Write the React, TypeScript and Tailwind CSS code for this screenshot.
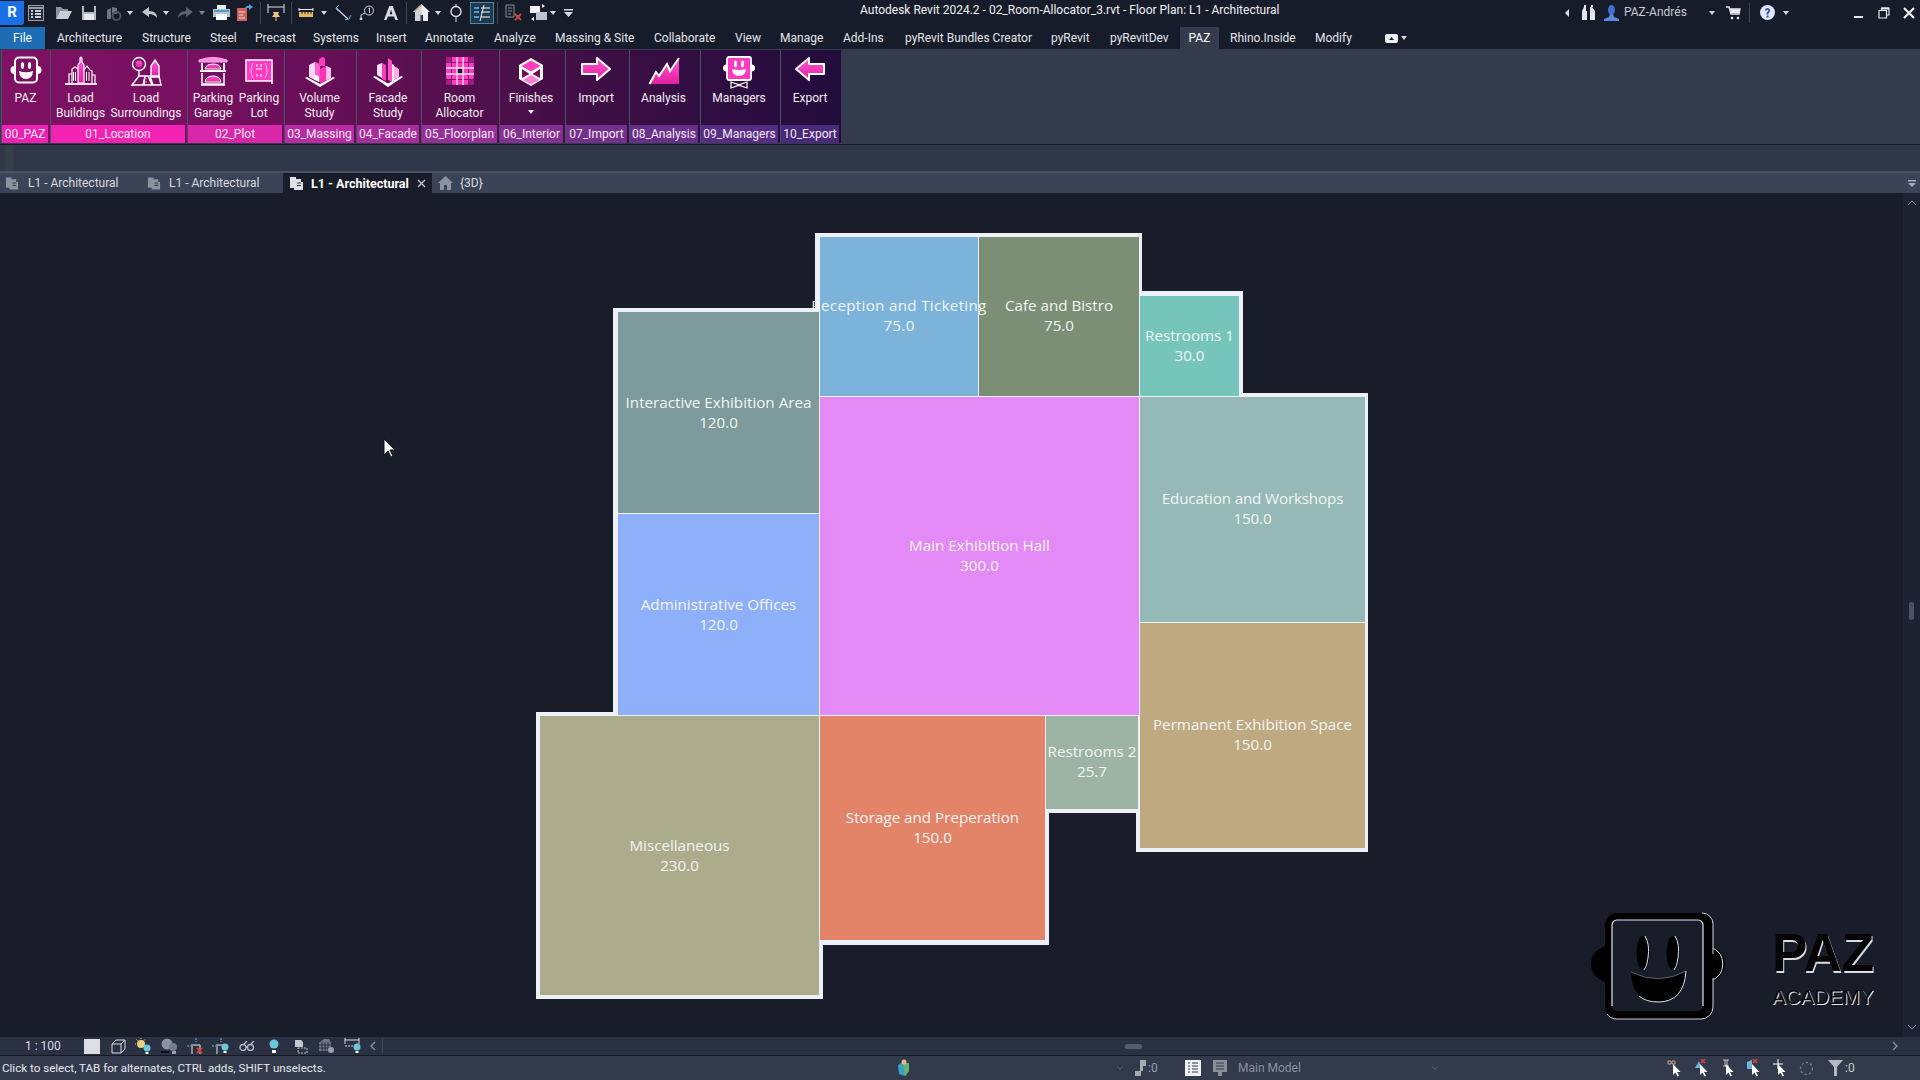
import React from "react";

const Caret = ({ c = "#d5d8de" }: { c?: string }) => (
  <svg width="6" height="4" viewBox="0 0 6 4"><path d="M0 0h6L3 4z" fill={c} /></svg>
);
const S = ({ className = "", children }: { className?: string; children?: React.ReactNode }) => (
  <span className={`flex items-center justify-center shrink-0 ${className}`}>{children}</span>
);
const Sep = ({ className = "" }: { className?: string }) => <span className={`w-px h-[22px] bg-[#3d4557] shrink-0 ${className}`} />;

const tabs: [string, string][] = [
  ["Architecture", "w-[85px]"], ["Structure", "w-[68px]"], ["Steel", "w-[45px]"], ["Precast", "w-[58px]"], ["Systems", "w-[63px]"],
  ["Insert", "w-[49px]"], ["Annotate", "w-[69px]"], ["Analyze", "w-[61px]"], ["Massing & Site", "w-[99px]"], ["Collaborate", "w-[81px]"],
  ["View", "w-[45px]"], ["Manage", "w-[63px]"], ["Add-Ins", "w-[62px]"], ["pyRevit Bundles Creator", "w-[146px]"], ["pyRevit", "w-[59px]"], ["pyRevitDev", "w-[70px]"],
];

/* ---------- ribbon icons ---------- */
const Face = () => (
  <svg width="32" height="28" viewBox="0 0 32 28">
    <circle cx="4.5" cy="14" r="4" fill="#fff" /><circle cx="27.5" cy="14" r="4" fill="#fff" />
    <rect x="5" y="1.5" width="22" height="25" rx="4" fill="#7b1160" stroke="#fff" strokeWidth="2" />
    <ellipse cx="12.5" cy="9.5" rx="1.6" ry="3.6" fill="#fff" /><ellipse cx="19.5" cy="9.5" rx="1.6" ry="3.6" fill="#fff" />
    <path d="M9 15q7 2.5 14 0q-.5 8-7 8t-7-8z" fill="#fff" />
  </svg>
);
const Buildings = () => (
  <svg width="34" height="30" viewBox="0 0 34 30" fill="none" stroke="#fff" strokeWidth="1.2">
    <path d="M14 27V9l2-3v-4l1-1 1 1v4l2 3v18z" fill="url(#pg)" />
    <path d="M8 27V13l3-2 3 2M20 14l3-4 3 4 2 1v12M5 27V18h3M28 19h3v8" />
    <path d="M9.500 16v9M11.500 16v9M22.500 16v9M25 16v9" strokeWidth="1" />
    <path d="M1 28h32" strokeWidth="1.8" />
  </svg>
);
const Surroundings = () => (
  <svg width="32" height="30" viewBox="0 0 32 30" fill="none" stroke="#fff" strokeWidth="1.4">
    <circle cx="9" cy="8" r="6.500" /><circle cx="9" cy="8" r="3.500" fill="url(#pg)" stroke="none" />
    <path d="M9 14v6" />
    <path d="M21 10l4-6 4 6v11h-8z" fill="url(#pg)" />
    <path d="M2 29l7-9h6l-2 9zM15 20h3l4 9h-8zM20 20h9l2 9h-8z" />
    <path d="M16 22v1.500M16 25v2" stroke="#ff4fd0" />
  </svg>
);
const Garage = () => (
  <svg width="32" height="30" viewBox="0 0 32 30" fill="none" stroke="#fff" strokeWidth="1.5">
    <path d="M2 4q14-5 28 0v2H2z" fill="#ff8ade" stroke="#ffb1e9" strokeWidth="1" />
    <path d="M5 7v7M27 7v7M3 15h26" strokeWidth="1.800" />
    <path d="M8 13q1-5 8-5t8 5z" fill="url(#pg)" strokeWidth="1" />
    <path d="M5 17v11h22V17" />
    <path d="M8 26q1-6 8-6t8 6z" fill="url(#pg)" strokeWidth="1" />
    <path d="M4 29h24" />
  </svg>
);
const Lot = () => (
  <svg width="32" height="30" viewBox="0 0 32 30">
    <rect x="3" y="4" width="26" height="21" fill="#ff3cc0" />
    <rect x="3" y="4" width="26" height="21" fill="none" stroke="#fff" strokeWidth="1.500" />
    <path d="M10 7q-4 8 0 15M22 7q4 8 0 15" stroke="#ffc2ee" fill="none" />
    <path d="M14 8v3M18 8v3M14 18v3M18 18v3M13 13h6" stroke="#fff" strokeWidth="1" />
    <path d="M29 25v3" stroke="#fff" strokeWidth="1.500" />
  </svg>
);
const Massing = () => (
  <svg width="32" height="32" viewBox="0 0 32 32">
    <path d="M1 22l15 9 15-9-2-1L16 28 3 21z" fill="#fff" />
    <path d="M5 9l6-3v18l-6-3z" fill="#ffd6f3" /><path d="M11 6l5 2v18l-5-2z" fill="#ff5fcb" />
    <path d="M15 10V3l3-2 3 1v8z" fill="#ff3cc0" />
    <path d="M16 13l6-3 5 2v10l-11 5.500z" fill="#ff2fb8" />
    <path d="M22 10l5 2v10l-5 2.500z" fill="#ffc2ee" />
    <path d="M10 18l5 2.500v5.500l-5-2.500z" fill="#fff" />
  </svg>
);
const Facade = () => (
  <svg width="32" height="32" viewBox="0 0 32 32">
    <path d="M1 21l15 10 15-10-2-1L16 27.500 3 20z" fill="#fff" />
    <path d="M5 9l5-2v15l-5-3z" fill="#ffe3f7" /><path d="M10 7l4 2v16l-4-2z" fill="#ff3cc0" />
    <path d="M16 2l4 3v21l-4-2z" fill="#ff4fc8" />
    <path d="M22 10l5 3v8l-5 3z" fill="#ffb1e7" />
    <path d="M20 8l2 1v15l-2 2z" fill="#ffe3f7" />
  </svg>
);
const gridCells = [0, 1, 2, 3, 4].flatMap((r) => [0, 1, 2, 3, 4].map((c) => [r, c]));
const Grid = () => (
  <svg width="30" height="30" viewBox="0 0 30 30">
    {gridCells.map(([r, c]) => (
      <rect key={`${r}-${c}`} x={1 + c * 5.7} y={1 + r * 5.7} width="5" height="5"
        fill={r === 2 && c === 2 ? "#2e0d33" : (r === 0 || r === 4) && (c === 0 || c === 4) ? "#a81b86" : "#ff3cc0"} />
    ))}
    <path d="M12 1v28M18 1v28M1 12h28M1 18h28" stroke="#ffe9f9" strokeWidth="1.300" />
  </svg>
);
const Cube = () => (
  <svg width="28" height="32" viewBox="0 0 28 32" fill="none">
    <path d="M14 2l12 7v14l-12 7-12-7V9z" fill="#fff" />
    <path d="M14 4.500L23.500 10 14 15.500 4.500 10z" fill="#ff3cc0" />
    <path d="M5 13l7.500 5-7.500 4z" fill="#6a0f58" /><path d="M23 13l-7.500 5 7.500 4z" fill="#6a0f58" />
    <path d="M14 19l8 5-8 4.500-8-4.500z" fill="#ff7fd6" />
  </svg>
);
const ArrowR = () => (
  <svg width="32" height="26" viewBox="0 0 32 26"><path d="M2 8h15V2l13 11-13 11v-6H2z" fill="url(#pg)" stroke="#fff" strokeWidth="2" strokeLinejoin="round" /></svg>
);
const ArrowL = () => (
  <svg width="32" height="26" viewBox="0 0 32 26"><path d="M30 8H15V2L2 13l13 11v-6h15z" fill="url(#pg)" stroke="#fff" strokeWidth="2" strokeLinejoin="round" /></svg>
);
const Zig = () => (
  <svg width="32" height="30" viewBox="0 0 32 30">
    <path d="M2 28l6-11 3 4 8-12 3 7L31 2v26z" fill="url(#pg)" />
    <path d="M1.500 28l6.500-12 3 4 8-12 3 7 9-13" fill="none" stroke="#fff" strokeWidth="2" />
  </svg>
);
const Manager = () => (
  <svg width="32" height="34" viewBox="0 0 32 34">
    <circle cx="3.500" cy="12" r="3.500" fill="#fff" /><circle cx="28.500" cy="12" r="3.500" fill="#fff" />
    <rect x="4" y="1" width="24" height="23" rx="2" fill="#ff3cc0" stroke="#fff" strokeWidth="1.800" />
    <ellipse cx="12.500" cy="8" rx="1.500" ry="3.500" fill="#fff" /><ellipse cx="19.500" cy="8" rx="1.500" ry="3.500" fill="#fff" />
    <path d="M9 13q7 2 14 0q-.5 7-7 7t-7-7z" fill="#fff" />
    <path d="M8 26l7 2.500v1L8 32zM24 26l-7 2.500v1l7 2.500z" fill="none" stroke="#fff" strokeWidth="1.200" />
    <circle cx="16" cy="29" r="1.300" fill="#fff" />
  </svg>
);

type Btn = { t: string[]; w: string; i: React.ReactNode; caret?: boolean };
type Panel = { label: string; w: string; pad: string; bg: string; lab: string; b: Btn[] };
const panels: Panel[] = [
  { label: "00_PAZ", w: "w-[49px]", pad: "", bg: "bg-[linear-gradient(90deg,#7d1163,#7c1162)]", lab: "bg-[#ef21b2]", b: [{ t: ["PAZ"], w: "w-[47px]", i: <Face /> }] },
  { label: "01_Location", w: "w-[137px]", pad: "pl-[3px]", bg: "bg-[linear-gradient(90deg,#7c1162,#771060)]", lab: "bg-[#f223b3]", b: [{ t: ["Load", "Buildings"], w: "w-[53px]", i: <Buildings /> }, { t: ["Load", "Surroundings"], w: "w-[78px]", i: <Surroundings /> }] },
  { label: "02_Plot", w: "w-[97px]", pad: "pl-[2px]", bg: "bg-[linear-gradient(90deg,#771060,#6c0f5a)]", lab: "bg-[#d827a9]", b: [{ t: ["Parking", "Garage"], w: "w-[46px]", i: <Garage /> }, { t: ["Parking", "Lot"], w: "w-[46px]", i: <Lot /> }] },
  { label: "03_Massing", w: "w-[72px]", pad: "", bg: "bg-[linear-gradient(90deg,#6c0f5a,#630f55)]", lab: "bg-[#b72ca2]", b: [{ t: ["Volume", "Study"], w: "w-[69px]", i: <Massing /> }] },
  { label: "04_Facade", w: "w-[65px]", pad: "", bg: "bg-[linear-gradient(90deg,#630f55,#590f50)]", lab: "bg-[#a62d9c]", b: [{ t: ["Facade", "Study"], w: "w-[62px]", i: <Facade /> }] },
  { label: "05_Floorplan", w: "w-[78px]", pad: "", bg: "bg-[linear-gradient(90deg,#590f50,#4d0f4b)]", lab: "bg-[#943097]", b: [{ t: ["Room", "Allocator"], w: "w-[75px]", i: <Grid /> }] },
  { label: "06_Interior", w: "w-[66px]", pad: "", bg: "bg-[linear-gradient(90deg,#4d0f4b,#430e47)]", lab: "bg-[#833191]", b: [{ t: ["Finishes"], w: "w-[62px]", i: <Cube />, caret: true }] },
  { label: "07_Import", w: "w-[64px]", pad: "", bg: "bg-[linear-gradient(90deg,#430e47,#3a0e44)]", lab: "bg-[#72308b]", b: [{ t: ["Import"], w: "w-[60px]", i: <ArrowR /> }] },
  { label: "08_Analysis", w: "w-[71px]", pad: "", bg: "bg-[linear-gradient(90deg,#3a0e44,#310e42)]", lab: "bg-[#662f88]", b: [{ t: ["Analysis"], w: "w-[67px]", i: <Zig /> }] },
  { label: "09_Managers", w: "w-[80px]", pad: "", bg: "bg-[linear-gradient(90deg,#310e42,#280d3f)]", lab: "bg-[#552d82]", b: [{ t: ["Managers"], w: "w-[76px]", i: <Manager /> }] },
  { label: "10_Export", w: "w-[61px]", pad: "", bg: "bg-[linear-gradient(90deg,#280d3f,#220c3b)]", lab: "bg-[#472b7a]", b: [{ t: ["Export"], w: "w-[58px]", i: <ArrowL /> }] },
];

/* ---------- floor plan ---------- */
const walls = [
  "left-[815px] top-[40px] w-[327px] h-[167px]",
  "left-[613px] top-[115px] w-[209px] h-[412px]",
  "left-[1136px] top-[98px] w-[107px] h-[109px]",
  "left-[1136px] top-[200px] w-[232px] h-[459px]",
  "left-[536px] top-[519px] w-[287px] h-[287px]",
  "left-[820px] top-[519px] w-[229px] h-[233px]",
  "left-[1045px] top-[519px] w-[94px] h-[101px]",
];
const rooms: [string, string, string][] = [
  ["Reception and Ticketing", "75.0", "left-[820px] top-[44px] w-[158px] h-[159px] bg-[#7cb3da] tracking-[0.3px] z-10 pb-[4px]"],
  ["Cafe and Bistro", "75.0", "left-[979px] top-[44px] w-[160px] h-[159px] bg-[#7a8f75] pb-[4px]"],
  ["Restrooms 1", "30.0", "left-[1140px] top-[103px] w-[99px] h-[100px] bg-[#76c5ba] pb-[2px]"],
  ["Interactive Exhibition Area", "120.0", "left-[618px] top-[119px] w-[201px] h-[201px] bg-[#7d9a9c] pb-[2px]"],
  ["Administrative Offices", "120.0", "left-[618px] top-[321px] w-[201px] h-[201px] bg-[#8eb0fb] pb-[2px]"],
  ["Main Exhibition Hall", "300.0", "left-[820px] top-[204px] w-[319px] h-[318px] bg-[#e48af6] pb-[2px]"],
  ["Education and Workshops", "150.0", "left-[1140px] top-[204px] w-[225px] h-[225px] bg-[#94b9b6] tracking-[-0.15px] pb-[4px]"],
  ["Permanent Exhibition Space", "150.0", "left-[1140px] top-[430px] w-[225px] h-[225px] bg-[#bfa981] pb-[4px]"],
  ["Miscellaneous", "230.0", "left-[540px] top-[523px] w-[279px] h-[279px] bg-[#abac8c] pb-[2px]"],
  ["Storage and Preperation", "150.0", "left-[820px] top-[523px] w-[225px] h-[224px] bg-[#e38468] pb-[2px]"],
  ["Restrooms 2", "25.7", "left-[1046px] top-[523px] w-[92px] h-[93px] bg-[#9db3a4] pb-[4px]"],
];

const TabDoc = ({ c = "#8b92a0" }: { c?: string }) => (
  <svg width="15" height="15" viewBox="0 0 15 15"><path d="M1 1h6v2h5v3h2v8H5v-2H1z" fill={c} /><path d="M8 7h4M8 9.500h4" stroke="#2b3240" /></svg>
);

export default function App() {
  return (
    <div className="w-[1920px] h-[1080px] flex flex-col overflow-hidden bg-[#181d29] font-['Roboto',sans-serif] text-[12px] leading-[15px] text-[#e8eaee]">
      <svg className="absolute w-0 h-0">
        <defs>
          <linearGradient id="pg" x1="0" y1="0" x2="0" y2="1"><stop offset="0" stopColor="#ff58d0" /><stop offset="1" stopColor="#e0209f" /></linearGradient>
        </defs>
      </svg>

      {/* title bar */}
      <div className="h-[27px] shrink-0 flex items-center bg-[#171c2a] pb-[2px]">
        <div className="flex items-center h-full shrink-0 w-[573px]">
          <S className="w-[24px] h-[24px] rounded-br-[3px] bg-[#1a6fe6] text-white font-bold text-[15px]">R</S>
          <S className="w-[24px]">
            <svg width="16" height="16" viewBox="0 0 16 16"><rect x=".5" y=".5" width="15" height="15" fill="#20283a" stroke="#9aa0ab" /><path d="M1 3h14" stroke="#9aa0ab" strokeWidth="2" /><path d="M3 6h2M3 9h2M3 12h2M7 6h6M7 9h6M7 12h6" stroke="#fff" strokeWidth="1.500" /></svg>
          </S>
          <S className="w-[24px] ml-[4px]">
            <svg width="18" height="15" viewBox="0 0 18 15"><path d="M1 14V2h5l2 2h5v2H5z" fill="#8d929c" /><path d="M1 14l4-8h12l-4 8z" fill="#c9ccd2" /></svg>
          </S>
          <S className="w-[24px] ml-[1px]">
            <svg width="16" height="16" viewBox="0 0 16 16"><path d="M1 1h14v14H1z" fill="#b4b8c0" /><path d="M3 1h10v6H3z" fill="#171c2a" /><path d="M3 9h10v6H3z" fill="#e8e9ec" /></svg>
          </S>
          <S className="w-[24px]">
            <svg width="17" height="16" viewBox="0 0 17 16"><path d="M2 5l4-2v11H2zM7 2l5 1v6H7z" fill="#6e7480" /><circle cx="11.500" cy="11" r="4" fill="none" stroke="#4c5361" strokeWidth="2" /></svg>
          </S>
          <S className="w-[10px]"><Caret /></S>
          <S className="w-[24px] ml-[3px]">
            <svg width="16" height="12" viewBox="0 0 16 12"><path d="M7 0L0 5l7 5V7q5 0 8 4 0-7-8-7z" fill="#c4c7ce" /></svg>
          </S>
          <S className="w-[8px]"><Caret /></S>
          <S className="w-[24px] ml-[3px]">
            <svg width="16" height="12" viewBox="0 0 16 12"><path d="M9 0l7 5-7 5V7q-5 0-8 4 0-7 8-7z" fill="#5a606d" /></svg>
          </S>
          <S className="w-[10px]"><Caret c="#80858f" /></S>
          <S className="w-[24px] ml-[2px]">
            <svg width="17" height="15" viewBox="0 0 17 15"><path d="M4 0h9v4H4z" fill="#eceef1" /><path d="M0 4h17v8h-3V9H3v3H0z" fill="#b8c4d4" /><path d="M3 9h11v6H3z" fill="#fff" /><path d="M1 6h15" stroke="#2d91c4" strokeWidth="1.500" /></svg>
          </S>
          <S className="w-[22px]">
            <svg width="17" height="17" viewBox="0 0 17 17"><path d="M1 4h10v13H1z" fill="#c9645e" /><path d="M3 8h6M3 11h4M3 14h6" stroke="#f1d2d0" /><path d="M9 4q2-3 4-2V0l4 3-4 3V4q-2 0-4 0z" fill="#48a8e0" /></svg>
          </S>
          <Sep className="ml-[5px]" />
          <S className="w-[22px] ml-[4px]">
            <svg width="18" height="18" viewBox="0 0 18 18" fill="none"><path d="M1 0v9M17 0v9M1 3h16" stroke="#dfe1e5" /><path d="M6 8h6l-1 2 2 3H5l2-3z" fill="#e6c98a" /><path d="M9 13v4" stroke="#e6c98a" /></svg>
          </S>
          <Sep className="ml-[4px]" />
          <S className="w-[22px] ml-[3px]">
            <svg width="16" height="10" viewBox="0 0 16 10"><path d="M1 4h14v5H1z" fill="#e3bb66" /><path d="M1 0v3M15 0v3M1 1.500h14" stroke="#eee" /><path d="M4 4v2M7 4v2M10 4v2M13 4v2" stroke="#372c12" /></svg>
          </S>
          <S className="w-[8px] ml-[3px]"><Caret /></S>
          <S className="w-[22px] ml-[4px]">
            <svg width="17" height="17" viewBox="0 0 17 17" fill="none"><path d="M1 4L13 15" stroke="#d8dbe0" strokeWidth="1.200" /><path d="M4 1L1 4l2 3M10 16l4-1 2-4" stroke="#6fb4e0" /></svg>
          </S>
          <S className="w-[22px] ml-[2px]">
            <svg width="16" height="15" viewBox="0 0 16 15" fill="none" stroke="#d8dbe0"><circle cx="10" cy="5.500" r="4.500" /><path d="M9.500 3.500l1-.5v5M6 8L2 10v4" /><circle cx="2" cy="14" r="1" fill="#d8dbe0" /></svg>
          </S>
          <S className="w-[22px] ml-[2px]">
            <svg width="14" height="16" viewBox="0 0 16 18"><path d="M6 1h4l6 16h-3l-1.500-4h-7L3 17H0zM6.500 10.500h3L8 5z" fill="#d8dce2" fillRule="evenodd" /></svg>
          </S>
          <Sep className="ml-[4px]" />
          <S className="w-[22px] ml-[3px]">
            <svg width="17" height="17" viewBox="0 0 17 17"><path d="M8.500 0L17 8h-2v9h-5v-6H7v6H2V8H0z" fill="#eceef1" /><path d="M8.500 0L0 8h2l6.500-6z" fill="#c9a25e" /><path d="M2 8l6.500-6v15H2z" fill="#b9bdc6" opacity=".6" /></svg>
          </S>
          <S className="w-[8px] ml-[2px]"><Caret /></S>
          <S className="w-[22px] ml-[3px]">
            <svg width="14" height="18" viewBox="0 0 14 18" fill="none" stroke="#e0e2e6"><circle cx="7" cy="7.500" r="5" strokeWidth="1.400" /><path d="M7 0v3M7 12v6" /></svg>
          </S>
          <S className="w-[24px] h-[22px] ml-[3px] bg-[#1e3950] border border-[#4f86a8]">
            <svg width="18" height="16" viewBox="0 0 18 16" fill="none"><path d="M1 3h5M1 7h5M1 12h5" stroke="#4f9bd0" strokeWidth="2" /><path d="M8 3h9M8 7h9M8 12h9" stroke="#fff" /><path d="M11 0L7 16" stroke="#eee" /></svg>
          </S>
          <Sep className="ml-[3px]" />
          <S className="w-[22px] ml-[4px]">
            <svg width="17" height="17" viewBox="0 0 17 17"><path d="M1 1h8v12H1z" fill="none" stroke="#878c97" /><path d="M3 4h4M3 7h4M3 10h3" stroke="#878c97" /><path d="M10 10l6 6M16 10l-6 6" stroke="#d0443c" strokeWidth="2" /></svg>
          </S>
          <S className="w-[22px] ml-[3px]">
            <svg width="17" height="17" viewBox="0 0 17 17"><path d="M0 2h10v7H0z" fill="#f0f1f3" /><path d="M6 8h11v8H6z" fill="#bfc3ca" /><path d="M12 0l3 2-3 2zM4 13l-3 2 3 2z" fill="#eee" /></svg>
          </S>
          <S className="w-[8px]"><Caret /></S>
          <S className="w-[12px] ml-[5px]">
            <svg width="9" height="8" viewBox="0 0 9 8"><path d="M0 0h9v1.500H0zM0 3h9L4.500 8z" fill="#d8dbe0" /></svg>
          </S>
        </div>
        <span className="ml-[287px] -mt-[4px] whitespace-nowrap text-[#f0f1f3]">Autodesk Revit 2024.2 - 02_Room-Allocator_3.rvt - Floor Plan: L1 - Architectural</span>
        <div className="ml-auto flex items-center h-full pr-[4px]">
          <S className="w-[6px]"><svg width="4" height="8" viewBox="0 0 4 8"><path d="M4 0v8L0 4z" fill="#d8dbe0" /></svg></S>
          <S className="w-[16px] ml-[10px]"><svg width="15" height="15" viewBox="0 0 15 15"><path d="M1 6l2-4h2v4l1 0v9H1zM9 6V2h2l3 4v9H9z" fill="#e4e6ea" /><path d="M3 0h2v2H3zM10 0h2v2h-2z" fill="#e4e6ea" /></svg></S>
          <S className="w-[16px] ml-[7px]"><svg width="15" height="16" viewBox="0 0 15 16"><ellipse cx="7.500" cy="5" rx="3.500" ry="5" fill="#3f6fd0" /><path d="M6 9h3l1 3 5 2v2H0v-2l5-2z" fill="#5d8ae0" /></svg></S>
          <span className="ml-[5px] w-[85px] text-[#c7cad1] whitespace-nowrap">PAZ-Andrés</span>
          <S className="w-[6px]"><Caret /></S>
          <S className="w-[16px] ml-[10px]"><svg width="15" height="14" viewBox="0 0 15 14" fill="none"><path d="M0 1h3l2 7h8l1-5H4" stroke="#e8e9ec" strokeWidth="1.300" /><path d="M4 3h10l-1 4H5z" fill="#e8e9ec" /><circle cx="6" cy="12" r="1.300" fill="#e8e9ec" /><circle cx="12" cy="12" r="1.300" fill="#e8e9ec" /></svg></S>
          <span className="w-px h-[20px] bg-[#3d4557] ml-[8px]" />
          <S className="w-[16px] ml-[9px]"><svg width="15" height="15" viewBox="0 0 15 15"><circle cx="7.500" cy="7.500" r="7.500" fill="#dfe8fb" /><path d="M4.800 5.500Q5 3 7.500 3T10.200 5.500Q10.200 7 8.500 8V9.500H6.500V7.500Q8.200 6.800 8.200 5.700 8 4.800 7.500 4.800 6.800 4.800 6.700 5.500zM6.500 10.500h2v2h-2z" fill="#2a55b0" /></svg></S>
          <S className="w-[6px] ml-[8px]"><Caret /></S>
          <S className="w-[14px] ml-[62px] pt-[8px]"><span className="block w-[9px] h-[2px] bg-[#e8e9ec]" /></S>
          <S className="w-[14px] ml-[12px]"><svg width="12" height="12" viewBox="0 0 12 12" fill="none" stroke="#e8e9ec" strokeWidth="1.200"><path d="M3.500 3V1H11v7H8.500" /><path d="M1 3.500h7.500V11H1z" /><path d="M3.500 1.500H11" strokeWidth="2" /></svg></S>
          <S className="w-[14px] ml-[11px]"><svg width="12" height="12" viewBox="0 0 12 12"><path d="M1 1l10 10M11 1L1 11" stroke="#f0f1f3" strokeWidth="2.200" /></svg></S>
        </div>
      </div>

      {/* menu tabs */}
      <div className="h-[22px] shrink-0 flex items-stretch bg-[#171c2a] text-[#e4e6ea]">
        <span className="w-[45px] flex items-center justify-center bg-[#1e6cb4] text-white pt-px">File</span>
        <div className="flex items-center ml-[12px] pt-px">
          {tabs.map(([t, w]) => <span key={t} className={`${w} whitespace-nowrap`}>{t}</span>)}
        </div>
        <span className="w-[39px] flex items-center justify-center bg-[#333b4d] text-white pt-px">PAZ</span>
        <span className="w-[85px] ml-[11px] flex items-center whitespace-nowrap pt-px">Rhino.Inside</span>
        <span className="w-[70px] flex items-center pt-px">Modify</span>
        <span className="flex items-center gap-[3px]">
          <svg width="13" height="9" viewBox="0 0 13 9"><rect width="13" height="9" rx="2" fill="#eceef1" /><path d="M4 6l2.500-3L9 6z" fill="#171c2a" /></svg>
          <Caret />
        </span>
      </div>

      {/* ribbon */}
      <div className="h-[95px] shrink-0 flex pl-px pt-px bg-[#333b4d]">
        {panels.map((p) => (
          <div key={p.label} className={`${p.w} ${p.bg} h-[93px] flex flex-col border-l border-[#4b5068] text-[#f3eef3]`}>
            <div className={`flex-1 flex ${p.pad}`}>
              {p.b.map((b) => (
                <div key={b.t.join()} className={`${b.w} flex flex-col items-center whitespace-nowrap`}>
                  <div className="h-[41px] pt-[6px] flex items-start justify-center">{b.i}</div>
                  {b.t.map((l) => <span key={l} className="block text-center">{l}</span>)}
                  {b.caret && <span className="mt-[4px]"><Caret c="#f3eef3" /></span>}
                </div>
              ))}
            </div>
            <div className={`h-[18px] mr-[2px] ${p.lab} flex items-center justify-center whitespace-nowrap text-[#f6e6f3]`}>{p.label}</div>
          </div>
        ))}
      </div>

      {/* options bar */}
      <div className="h-[29px] shrink-0 bg-[#2f3749] border-b-[2px] border-b-[#485063] shadow-[inset_0_1px_0_#151a25] flex pt-px">
        <span className="w-[8px] ml-[5px] bg-[#333f46]" />
      </div>

      {/* view tabs */}
      <div className="h-[20px] shrink-0 bg-[#3b4456] flex items-center text-[#d7dae0]">
        <S className="w-[14px] ml-[5px]"><TabDoc /></S>
        <span className="ml-[9px] w-[119px] whitespace-nowrap pt-px">L1 - Architectural</span>
        <S className="w-[14px]"><TabDoc /></S>
        <span className="ml-[8px] w-[114px] whitespace-nowrap pt-px">L1 - Architectural</span>
        <div className="h-full w-[149px] bg-[#181d29] flex items-center shrink-0">
          <S className="w-[15px] ml-[6px]"><TabDoc c="#dfe1e6" /></S>
          <span className="ml-[7px] w-[106px] font-bold text-[12.5px] text-white whitespace-nowrap pt-px">L1 - Architectural</span>
          <svg width="9" height="9" viewBox="0 0 9 9"><path d="M1 1l7 7M8 1L1 8" stroke="#c3c6cd" strokeWidth="1.400" /></svg>
        </div>
        <S className="w-[15px] ml-[6px]"><svg width="15" height="14" viewBox="0 0 15 14"><path d="M7.500 0L15 7h-2v7H9V9H6v5H2V7H0z" fill="#8b92a0" /></svg></S>
        <span className="ml-[7px] whitespace-nowrap pt-px">{"{3D}"}</span>
        <S className="ml-auto mr-[4px] w-[8px]"><svg width="8" height="7" viewBox="0 0 8 7"><path d="M0 0h8v1.500H0zM0 3h8L4 7z" fill="#a5abb6" /></svg></S>
      </div>

      {/* canvas */}
      <div className="flex-1 flex min-h-0">
        <div className="relative flex-1">
          {walls.map((w) => <div key={w} className={`absolute bg-[#edf1f7] ${w}`} />)}
          {rooms.map(([n, a, c]) => (
            <div key={n} className={`absolute flex flex-col items-center justify-center text-[15.2px] leading-[20px] text-[#f2f5f4] whitespace-nowrap font-['Open_Sans',sans-serif] ${c}`}>
              <span>{n}</span><span>{a}</span>
            </div>
          ))}
          <svg className="absolute left-[383px] top-[245px]" width="13" height="20" viewBox="0 0 13 20"><path d="M1 1v16l4-4 3 6 2-1-3-6h5z" fill="#fff" stroke="#111" /></svg>

          {/* logo */}
          <div className="absolute left-[1590px] top-[719px] w-[300px] h-[110px] flex items-center">
            <svg className="shrink-0" width="138" height="110" viewBox="0 0 138 110" fill="none">
              <circle cx="19" cy="52" r="18" fill="#000" /><circle cx="117" cy="52" r="18" fill="#000" />
              <path d="M123 36a18 18 0 0 1 0 32" stroke="#dfe2e7" />
              <rect x="15" y="1" width="108" height="106" rx="12" fill="#000" />
              <path d="M112 1a11 11 0 0 1 11 11v30M123 66v29a12 12 0 0 1-12 12H27a12 12 0 0 1-10-5" stroke="#cfd3da" />
              <rect x="22" y="8" width="91" height="91" rx="5" fill="#181d29" />
              <path d="M22 94V13a5 5 0 0 1 5-5h81a5 5 0 0 1 5 5v81" stroke="#e2e5ea" strokeWidth="1.200" />
              <ellipse cx="53" cy="41" rx="6.500" ry="17" fill="#000" />
              <path d="M55 24q5 8 3 22-1 9-4 12" stroke="#dfe2e7" />
              <ellipse cx="83" cy="41" rx="6.500" ry="17" fill="#000" />
              <path d="M85 24q5 8 3 22-1 9-4 12" stroke="#dfe2e7" />
              <path d="M41 60q28 14 55-1q-2 31-28 31T41 60z" fill="#000" />
              <path d="M96 59q-2 31-28 31-12 0-19-6" stroke="#dfe2e7" />
              <path d="M41 60q28 14 55-1" stroke="#8d929c" strokeWidth=".6" />
            </svg>
            <div className="ml-[44px] mt-[4px] flex flex-col items-start font-['Liberation_Sans',sans-serif]">
              <span className="text-[53px] leading-[48px] font-bold text-[#050505] [text-shadow:1px_2px_0_#d9dce2]">PAZ</span>
              <span className="mt-[8px] text-[20.5px] leading-[24px] text-[#0a0a0a] [text-shadow:1px_1px_0_#e5e7eb]">ACADEMY</span>
            </div>
          </div>
        </div>
        <div className="w-[17px] shrink-0 bg-[#1e2331] flex flex-col items-center justify-between py-[7px]">
          <svg width="10" height="6" viewBox="0 0 10 6"><path d="M1 5l4-4 4 4" fill="none" stroke="#8b92a0" /></svg>
          <span className="w-[5px] h-[18px] rounded-[2px] bg-[#4a5263] -mt-[8px]" />
          <svg width="10" height="6" viewBox="0 0 10 6"><path d="M1 1l4 4 4-4" fill="none" stroke="#8b92a0" /></svg>
        </div>
      </div>

      {/* view control bar */}
      <div className="h-[19px] shrink-0 bg-[#2a3142] flex items-center border-b border-[#141822]">
        <span className="ml-[25px] w-[59px] text-[#d7dae0] whitespace-nowrap">1 : 100</span>
        <S className="w-[16px] h-[15px] bg-[#dcdee3]" />
        <S className="w-[16px] ml-[10px]"><svg width="15" height="15" viewBox="0 0 15 15" fill="none" stroke="#d8dbe0"><path d="M1 5h9v9H1zM1 5l4-4h9v9l-4 4M10 5l4-4" /></svg></S>
        <S className="w-[18px] ml-[8px]"><svg width="18" height="16" viewBox="0 0 18 16"><circle cx="7" cy="6" r="4" fill="#eccf7e" /><path d="M7 0v1M1 6h1M2.500 1.500l1 1M11 1.500l-1 1" stroke="#eccf7e" /><circle cx="13" cy="10" r="3.500" fill="#6ec6dc" /><path d="M11.500 14h3v2h-3z" fill="#fff" /></svg></S>
        <S className="w-[18px] ml-[8px]"><svg width="18" height="16" viewBox="0 0 18 16"><circle cx="7" cy="6" r="5.500" fill="#8b92a0" /><circle cx="13" cy="9" r="4" fill="#747b89" /><path d="M1 13h8v2H1z" fill="#111" /><path d="M12 13h4v3h-4z" fill="#9aa0ab" /></svg></S>
        <S className="w-[18px] ml-[9px]"><svg width="18" height="16" viewBox="0 0 18 16" fill="none"><path d="M9 0v4M0 8h4" stroke="#6fb4e0" strokeDasharray="2 1" /><path d="M4 7h9v9M5 8v8" stroke="#e8e9ec" /><path d="M10 10l5 5M15 10l-5 5" stroke="#d0443c" strokeWidth="2" /></svg></S>
        <S className="w-[18px] ml-[7px]"><svg width="18" height="16" viewBox="0 0 18 16" fill="none"><path d="M9 0v4M0 8h4" stroke="#6fb4e0" strokeDasharray="2 1" /><path d="M4 7h9M5 8v8" stroke="#e8e9ec" /><circle cx="13" cy="9" r="3.500" fill="#6ec6dc" /><path d="M11.500 13h3v2h-3z" fill="#fff" /></svg></S>
        <S className="w-[16px] ml-[9px]"><svg width="16" height="10" viewBox="0 0 16 10" fill="none" stroke="#b9bdc6" strokeWidth="1.300"><circle cx="4" cy="6.500" r="3" /><circle cx="11.500" cy="6.500" r="3" /><path d="M7 6h1.500M5 3l3-3M12 3l3-3" /></svg></S>
        <S className="w-[12px] ml-[13px]"><svg width="10" height="15" viewBox="0 0 10 15"><circle cx="5" cy="5" r="4.500" fill="#6ec6dc" /><path d="M3 11h4v3H3z" fill="#fff" /></svg></S>
        <S className="w-[14px] ml-[14px]"><svg width="14" height="15" viewBox="0 0 14 15" fill="none"><path d="M1 1h6l2 2v5H1z" fill="#c2c6cd" /><path d="M4 9h9v5H4z" stroke="#b9bdc6" strokeDasharray="2 1" /></svg></S>
        <S className="w-[16px] ml-[10px]"><svg width="16" height="16" viewBox="0 0 16 16"><path d="M1 5l5-4h5l2 4v8H1z" fill="#6f7684" /><path d="M1 7h12M1 10h12M4 4v9M7 4v9M10 4v9" stroke="#2a3142" /><circle cx="13" cy="12" r="3" fill="#9aa0ab" /></svg></S>
        <S className="w-[18px] ml-[10px]"><svg width="18" height="16" viewBox="0 0 18 16" fill="none"><path d="M1 0v6M15 0v6M1 2h14" stroke="#d8dbe0" /><path d="M1 8h8" stroke="#d8dbe0" strokeDasharray="2 1" /><circle cx="13" cy="9" r="3.500" fill="#6ec6dc" /><path d="M11.500 13h3v2h-3z" fill="#fff" /></svg></S>
        <S className="w-[6px] ml-[8px]"><svg width="6" height="10" viewBox="0 0 6 10"><path d="M5 1L1 5l4 4" fill="none" stroke="#8b92a0" strokeWidth="1.300" /></svg></S>
        <span className="w-px h-[16px] bg-[#3d4557] ml-[6px]" />
        <span className="ml-[742px] w-[17px] h-[5px] rounded-[2px] bg-[#545c6d]" />
        <span className="ml-auto mr-[22px]"><svg width="6" height="10" viewBox="0 0 6 10"><path d="M1 1l4 4-4 4" fill="none" stroke="#8b92a0" strokeWidth="1.300" /></svg></span>
      </div>

      {/* status bar */}
      <div className="h-[24px] shrink-0 bg-[#323a4c] flex items-center text-[#e6e8ec]">
        <span className="ml-[2px] w-[893px] whitespace-nowrap text-[11.6px] pt-px">Click to select, TAB for alternates, CTRL adds, SHIFT unselects.</span>
        <S className="w-[16px]"><svg width="14" height="18" viewBox="0 0 14 18"><path d="M5 4h7l1 8-4 5-6-2-1-9z" fill="#3aa0c8" /><path d="M7 4h6v8l-4 5z" fill="#6ab56a" /><circle cx="8" cy="3" r="2.500" fill="#e8b68e" /></svg></S>
        <S className="w-[6px] ml-[206px]"><svg width="6" height="4" viewBox="0 0 6 4"><path d="M.5.500L3 3.500 5.500.5" fill="none" stroke="#5c6474" /></svg></S>
        <S className="w-[14px] ml-[11px]"><svg width="12" height="16" viewBox="0 0 12 16"><path d="M5 0h6v6H8v5H5zM0 11h6v5H0z" fill="#a7abb4" /></svg></S>
        <span className="ml-0 w-[37px] text-[#989ea9] pt-px">:0</span>
        <S className="w-[16px]"><svg width="16" height="16" viewBox="0 0 16 16"><rect width="16" height="16" fill="#f0f1f3" /><path d="M3 3h2M7 3h6M3 6h2M7 6h6M3 9h2M7 9h6M3 12h2M7 12h6" stroke="#323a4c" /></svg></S>
        <S className="w-[16px] ml-[11px]"><svg width="16" height="16" viewBox="0 0 16 16"><path d="M1 0h14v12H1z" fill="#8b8f97" /><path d="M6 12h4v4H6z" fill="#8b8f97" /><path d="M4 3h8M4 6h8M4 9h8" stroke="#323a4c" /></svg></S>
        <span className="ml-[10px] w-[194px] text-[#8a909b] whitespace-nowrap pt-px">Main Model</span>
        <S className="w-[6px]"><svg width="6" height="4" viewBox="0 0 6 4"><path d="M.5.500L3 3.500 5.500.5" fill="none" stroke="#5c6474" /></svg></S>
        <Pick className="ml-[229px]"><path d="M1 2h3v3H1zM5 2h3v3H5z" fill="none" stroke="#c9a089" strokeWidth="1" /></Pick>
        <Pick className="ml-[11px]"><path d="M1 9l4-7 2 7z" fill="#6fb4e0" /><path d="M7 0l4 4M11 0L7 4" stroke="#d0443c" strokeWidth="1.500" /></Pick>
        <Pick className="ml-[10px]"><path d="M3 1h6M5 1v6h2V1M3 7h6" stroke="#b9bdc6" fill="none" /></Pick>
        <Pick className="ml-[10px]"><path d="M1 3l5-2v9H1z" fill="#6fb4e0" /><path d="M7 0l4 4M11 0L7 4" stroke="#d0443c" strokeWidth="1.500" /></Pick>
        <Pick className="ml-[10px]"><path d="M6 0v10M1 5h10" stroke="#fff" /></Pick>
        <S className="w-[16px] ml-[10px]"><svg width="15" height="15" viewBox="0 0 15 15"><circle cx="7.500" cy="7.500" r="6" fill="none" stroke="#7d8490" strokeDasharray="2 2.500" strokeWidth="1.300" /></svg></S>
        <S className="w-[16px] ml-[13px]"><svg width="15" height="16" viewBox="0 0 15 16"><path d="M0 0h15L9 7v9H6V7z" fill="#b5b9c1" /></svg></S>
        <span className="ml-[2px] text-[#c9ccd2] pt-px">:0</span>
      </div>
    </div>
  );
}

function Pick({ className = "", children }: { className?: string; children: React.ReactNode }) {
  return (
    <S className={`w-[16px] ${className}`}>
      <svg width="16" height="18" viewBox="0 0 16 18">
        {children}
        <path d="M6 5v11l2.500-2.500 2 4 1.500-.8-2-3.700h3.500z" fill="#fff" />
      </svg>
    </S>
  );
}
